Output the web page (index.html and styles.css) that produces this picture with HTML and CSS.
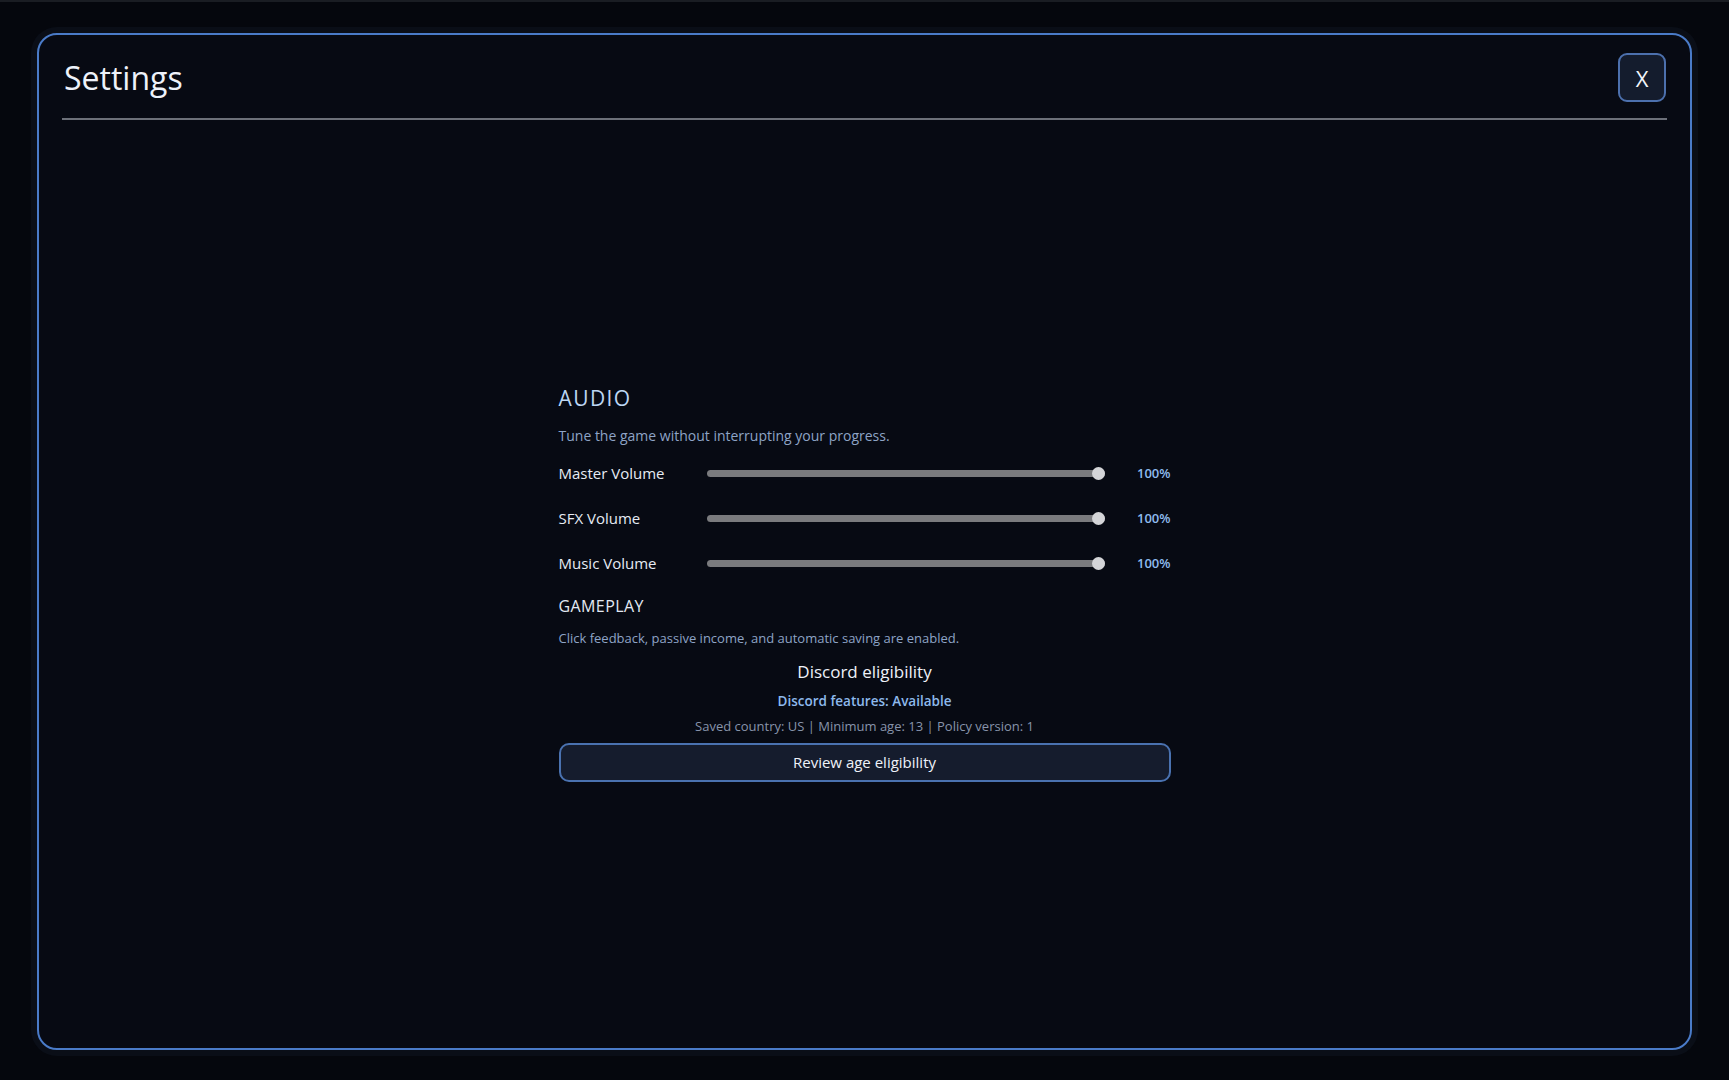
FILE: index.html
```html
<!DOCTYPE html>
<html>
<head>
<meta name="viewport" content="width=device-width, initial-scale=1">
<title>Settings</title>
<link rel="stylesheet" href="styles.css">
</head>
<body>

<div class="modal">
  <header class="modal__header">
    <h1 class="modal__title">Settings</h1>
    <button class="modal__close" type="button">X</button>
  </header>

  <main class="modal__body">
    <section class="settings">
      <h2 class="settings__heading">AUDIO</h2>
      <p class="settings__hint">Tune the game without interrupting your progress.</p>

      <div class="volume">
        <label class="volume__label" for="master">Master Volume</label>
        <input class="volume__range" type="range" id="master" min="0" max="100" value="100">
        <span class="volume__value">100%</span>
      </div>
      <div class="volume">
        <label class="volume__label" for="sfx">SFX Volume</label>
        <input class="volume__range" type="range" id="sfx" min="0" max="100" value="100">
        <span class="volume__value">100%</span>
      </div>
      <div class="volume">
        <label class="volume__label" for="music">Music Volume</label>
        <input class="volume__range" type="range" id="music" min="0" max="100" value="100">
        <span class="volume__value">100%</span>
      </div>

      <h3 class="settings__subheading">GAMEPLAY</h3>
      <p class="settings__hint settings__hint--small">Click feedback, passive income, and automatic saving are enabled.</p>

      <div class="discord">
        <div class="discord__title">Discord eligibility</div>
        <div class="discord__status">Discord features: Available</div>
        <div class="discord__meta">Saved country: US | Minimum age: 13 | Policy version: 1</div>
      </div>
      <button class="review" type="button">Review age eligibility</button>
    </section>
  </main>
</div>

</body>
</html>
```

FILE: styles.css
```css
* {box-sizing: border-box;}

html, body {
  height: 100%;
}

body {
  margin: 0;
  border-top: 2px solid #1a1d23;
  background: #05070d;
  color: #e8edf6;
  font-family: "Open Sans", "Noto Sans", sans-serif;
}

/* modal frame */
.modal {
  display: flex;
  flex-direction: column;
  height: calc(100% - 61px);
  margin: 31px 37px 0;
  padding: 18px 23px 0;
  background: #070a13;
  border: 2px solid #4a7bc8;
  border-radius: 20px;
  box-shadow: 0 0 0 6px #0a0e17;
}

.modal__header {
  display: flex;
  align-items: center;
  justify-content: space-between;
  padding: 0 2px 16px 2px;
  border-bottom: 2px solid #6c7079;
}

.modal__title {
  margin: 0;
  font-size: 32px;
  font-weight: 400;
  color: #eef2fa;
}

.modal__close {
  width: 48px;
  height: 49px;
  margin-right: -1px;
  background: #141c2d;
  border: 2px solid #4c70ad;
  border-radius: 9px;
  color: #f2f5fb;
  font-family: "Open Sans", "Noto Sans", sans-serif;
  font-size: 22px;
  cursor: pointer;
}

.modal__body {
  flex: 1;
  display: flex;
  align-items: center;
  justify-content: center;
}

/* settings column */
.settings {
  width: 612px;
  margin-top: -3px;
}

.settings__heading {
  margin: 0 0 14px;
  font-size: 21px;
  font-weight: 400;
  letter-spacing: 1.4px;
  color: #bcd6f3;
}

.settings__hint {
  margin: 0 0 6px;
  font-size: 14px;
  font-weight: 400;
  color: #8ea4c6;
}

.settings__hint--small {
  margin-bottom: 13px;
  font-size: 13px;
}

.settings__subheading {
  margin: 9px 0 12px;
  font-size: 16px;
  font-weight: 400;
  letter-spacing: 0.4px;
  color: #e3e9f3;
}

/* volume rows */
.volume {
  display: grid;
  grid-template-columns: 132px 1fr 50px;
  align-items: center;
  gap: 16px;
  height: 45px;
}

.volume__label {
  font-size: 15px;
  font-weight: 400;
  color: #e6ebf4;
}

.volume__value {
  text-align: right;
  font-size: 13px;
  font-weight: 600;
  color: #8fbcef;
}

.volume__range {
  -webkit-appearance: none;
  display: block;
  width: 100%;
  margin: 0;
  background: transparent;
}
.volume__range::-webkit-slider-runnable-track {
  -webkit-appearance: none;
  height: 7px;
  background: #7a7b7e;
  border-radius: 999px;
}
.volume__range::-webkit-slider-thumb {
  -webkit-appearance: none;
  width: 13px;
  height: 13px;
  margin-top: -3px;
  border-radius: 50%;
  background: #d4d5d8;
}
.volume__range::-moz-range-track {
  height: 7px;
  background: #7a7b7e;
  border-radius: 999px;
}
.volume__range::-moz-range-thumb {
  width: 13px;
  height: 13px;
  border: none;
  border-radius: 50%;
  background: #d4d5d8;
}

/* discord block */
.discord {
  text-align: center;
}

.discord__title {
  font-size: 17px;
  font-weight: 400;
  color: #eef2f9;
  line-height: 24px;
}

.discord__status {
  margin-top: 7px;
  font-size: 13.5px;
  font-weight: 600;
  color: #8db9ec;
  line-height: 20px;
}

.discord__meta {
  margin-top: 6px;
  font-size: 13px;
  font-weight: 400;
  color: #8794ab;
  line-height: 18px;
}

.review {
  display: block;
  width: 100%;
  height: 39px;
  margin-top: 8px;
  background: #151c2d;
  border: 2px solid #4a72b0;
  border-radius: 10px;
  color: #eef2f9;
  font-family: "Open Sans", "Noto Sans", sans-serif;
  font-size: 15px;
  font-weight: 400;
  cursor: pointer;
}
```
